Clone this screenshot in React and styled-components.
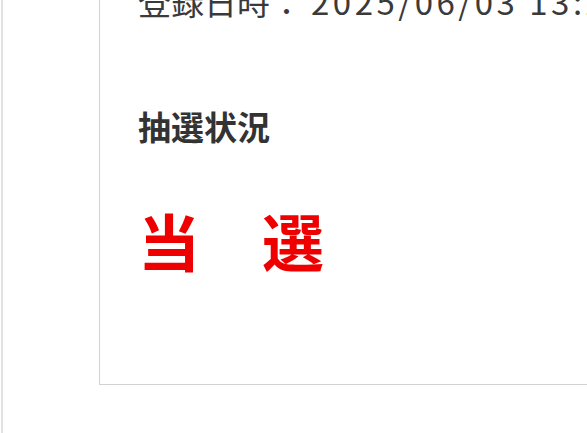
import React from "react";
import styled, { createGlobalStyle } from "styled-components";

const GlobalStyle = createGlobalStyle`
  html, body {
    margin: 0;
    padding: 0;
    background: #fff;
  }
  body {
    font-family: "Noto Sans CJK JP", "Noto Sans", sans-serif;
    color: #333;
    overflow: hidden;
  }
`;

const Page = styled.div`
  height: 433px;
  margin-left: 1px;
  padding-left: 96px;
  border-left: 2px solid #e2e2e2;
  overflow: hidden;
`;

const Card = styled.section`
  margin-top: -23px;
  padding: 0 0 104px 38px;
  border: 1px solid #d2d2d2;
  border-right: none;
  border-top: none;
  background: #fff;
`;

const Meta = styled.p`
  margin: 0;
  font-size: 33px;
  line-height: 48px;
  color: #3a3a3a;
  white-space: nowrap;

  span {
    margin-left: 8px;
    letter-spacing: 3.5px;
  }
`;

const Label = styled.h2`
  margin: 77px 0 0;
  font-size: 33px;
  font-weight: 700;
  line-height: 48px;
  color: #333;
`;

const Result = styled.div`
  margin-top: 50px;
  font-size: 62px;
  font-weight: 700;
  line-height: 80px;
  color: ${({ $won }) => ($won ? "#ee0000" : "#333")};
`;

const App = () => {
  const entry = {
    registeredAt: "2025/06/03 13:24",
    status: "当　選",
    won: true,
  };

  return (
    <>
      <GlobalStyle />
      <Page>
        <Card>
          <Meta>
            登録日時：<span>{entry.registeredAt}</span>
          </Meta>
          <Label>抽選状況</Label>
          <Result $won={entry.won}>{entry.status}</Result>
        </Card>
      </Page>
    </>
  );
};

export default App;
